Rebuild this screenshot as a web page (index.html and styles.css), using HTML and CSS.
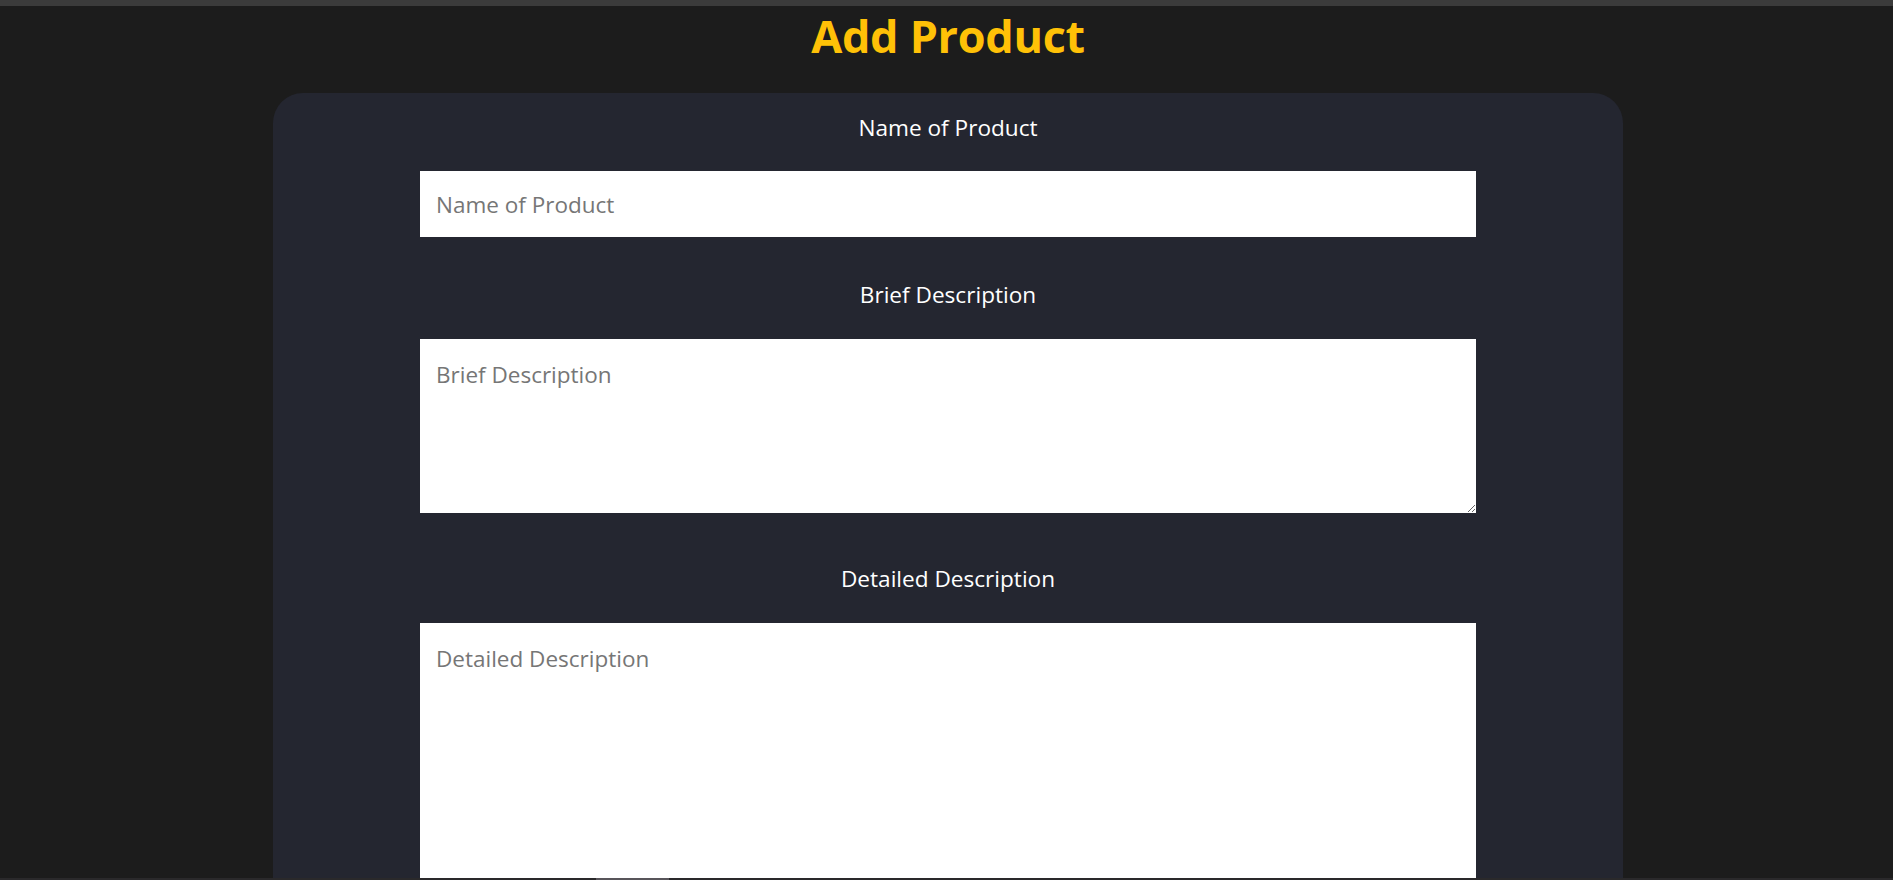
FILE: index.html
```html
<!DOCTYPE html>
<html lang="en">
<head>
<meta charset="utf-8">
<title>Add Product</title>
<link rel="stylesheet" href="styles.css">
</head>
<body>
<div class="topbar"></div>
<main class="page">
  <h1 class="title">Add Product</h1>
  <form class="card">
    <label class="label label-first" for="name">Name of Product</label>
    <input class="field field-input" id="name" type="text" placeholder="Name of Product">
    <label class="label label-second" for="brief">Brief Description</label>
    <textarea class="field field-brief" id="brief" placeholder="Brief Description"></textarea>
    <label class="label label-third" for="detail">Detailed Description</label>
    <textarea class="field field-detail" id="detail" placeholder="Detailed Description"></textarea>
  </form>
</main>
<div class="hscroll"><div class="hthumb"></div></div>
</body>
</html>
```
FILE: styles.css
```css
html, body {
  margin: 0;
  padding: 0;
  height: 100%;
  overflow: hidden;
  background: #1c1c1c;
}
body {
  font-family: "Open Sans", "Noto Sans", sans-serif;
}
.topbar {
  height: 6px;
  background: #3b3b3b;
}
.page {
  display: flex;
  flex-direction: column;
  align-items: center;
  padding-left: 3px;
}
.title {
  margin: 0;
  font-size: 45px;
  line-height: 60px;
  font-weight: 700;
  color: #ffc107;
  letter-spacing: -0.3px;
}
.card {
  margin-top: 27px;
  width: 1350px;
  height: 1000px;
  box-sizing: border-box;
  background: #242630;
  border-radius: 30px;
  padding-top: 20px;
  display: flex;
  flex-direction: column;
  align-items: center;
}
.label {
  display: block;
  color: #ffffff;
  font-size: 22.6px;
  line-height: 30px;
}
.label-second { margin-top: 43px; }
.label-third { margin-top: 51px; }
.field {
  display: block;
  width: 1056px;
  box-sizing: border-box;
  border: none;
  outline: none;
  background: #ffffff;
  font-family: "Open Sans", "Noto Sans", sans-serif;
  font-size: 22.5px;
  color: #333;
  margin: 0;
}
.field::placeholder {
  color: #767676;
}
.field-input {
  margin-top: 28px;
  height: 66px;
  padding: 0 16px;
}
.field-brief {
  margin-top: 29px;
  height: 174px;
  padding: 20px 16px 16px;
}
.field-detail {
  margin-top: 29px;
  height: 320px;
  padding: 20px 16px 16px;
  resize: vertical;
}
.hscroll {
  position: fixed;
  left: 0;
  right: 0;
  bottom: 0;
  height: 2px;
  background: #2a292b;
}
.hthumb {
  position: absolute;
  left: 596px;
  width: 73px;
  top: 0;
  height: 2px;
  background: #58555a;
}
```
